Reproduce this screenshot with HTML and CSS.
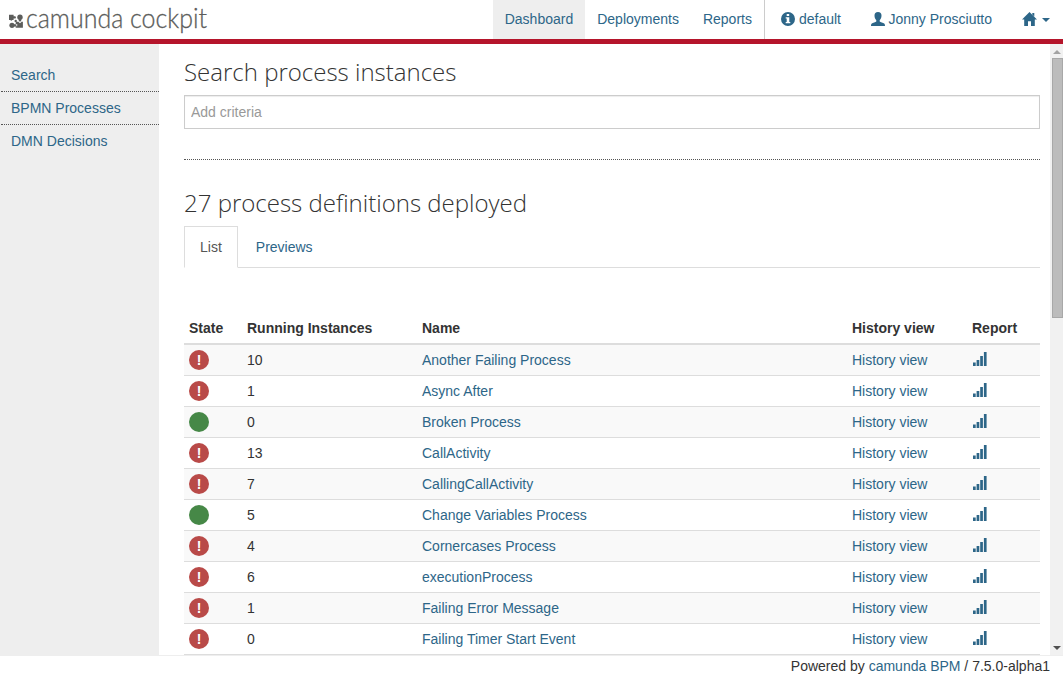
FILE: index.html
```
<!DOCTYPE html>
<html lang="en">
<head>
<meta charset="utf-8">
<title>camunda cockpit</title>
<link rel="stylesheet" href="styles.css">
</head>
<body>
<svg class="defs" width="0" height="0">
  <symbol id="info" viewBox="0 0 14 14"><path fill-rule="evenodd" d="M7 0a7 7 0 1 1 0 14A7 7 0 0 1 7 0zM5.7 2v2h2.5V2zM4.7 5.2v1.3h1V10h-1v1.3h4.600V10h-1V5.200z"/></symbol>
  <symbol id="user" viewBox="0 0 14 14"><path d="M7 0C4.600 0 3.500 1.500 3.500 3.500c0 1.900.7 3.600 1.800 4.700v1.300c-.6.600-3.500 1.300-4.500 2C.2 12 0 13 0 14h14c0-1-.2-2-.8-2.500-1-.7-3.900-1.400-4.500-2V8.200c1.100-1.100 1.800-2.800 1.800-4.700C10.500 1.500 9.400 0 7 0z"/></symbol>
  <symbol id="home" viewBox="0 0 15 14"><path d="M7.500 0 15 7.600h-2.200V14H9V9.300H6V14H2.200V7.600H0L3 4.600 7.500 0zM10.300 1h2v3.500l-2-2z"/></symbol>
  <symbol id="signal" viewBox="0 0 14 14"><path d="M0 10.500h2.700V14H0zM3.600 8h2.700v6H3.600zM7.200 4h2.700v10H7.200zM10.900 0h2.700v14h-2.700z"/></symbol>
</svg>
<header class="header">
  <a class="brand">
    <svg width="215" height="39" viewBox="0 0 215 39">
      <g class="mark">
        <path d="M9 14.700h4.600v1.600h1.600a1.200 1.200 0 0 1 0 2.200h-1.600v1.600h-1.300a1.200 1.200 0 0 1-2 0H9z"/>
        <circle cx="20" cy="17.300" r="2.700"/>
        <path d="M18.800 19h2.400v2.400h-2.400z"/>
        <circle cx="12" cy="25.300" r="2.600"/>
        <path d="M14 24.200h2.400v2.200H14zM15.700 21.800h2.600l1.700 1.500 1.700-1.500h1.200v6h-7.200v-1.500h1.500v-2.400h-1.500z"/>
        <circle cx="15.700" cy="20.900" r="1.200"/>
      </g>
      <text class="wordmark" x="26" y="28" textLength="181" lengthAdjust="spacingAndGlyphs">camunda cockpit</text>
    </svg>
  </a>
  <nav class="nav">
    <a class="nav-item active">Dashboard</a>
    <a class="nav-item">Deployments</a>
    <a class="nav-item reports">Reports</a>
    <a class="nav-item engine"><svg class="icon"><use href="#info"/></svg>default</a>
    <a class="nav-item account"><svg class="icon"><use href="#user"/></svg>Jonny Prosciutto</a>
    <a class="nav-item apps"><svg class="icon home"><use href="#home"/></svg><i class="caret"></i></a>
  </nav>
</header>
<div class="middle">
  <aside class="sidebar">
    <a>Search</a>
    <a>BPMN Processes</a>
    <a>DMN Decisions</a>
  </aside>
  <main class="content">
    <h3>Search process instances</h3>
    <input class="search" type="text" placeholder="Add criteria">
    <h3 class="deployed">27 process definitions deployed</h3>
    <div class="tabs"><a class="tab current">List</a><a class="tab">Previews</a></div>
    <table class="definitions">
      <thead><tr><th class="state">State</th><th class="instances">Running Instances</th><th class="name">Name</th><th class="history">History view</th><th class="report">Report</th></tr></thead>
      <tbody>
        <tr><td><i class="dot failing">!</i></td><td>10</td><td><a>Another Failing Process</a></td><td><a>History view</a></td><td><svg class="icon"><use href="#signal"/></svg></td></tr>
        <tr><td><i class="dot failing">!</i></td><td>1</td><td><a>Async After</a></td><td><a>History view</a></td><td><svg class="icon"><use href="#signal"/></svg></td></tr>
        <tr><td><i class="dot"></i></td><td>0</td><td><a>Broken Process</a></td><td><a>History view</a></td><td><svg class="icon"><use href="#signal"/></svg></td></tr>
        <tr><td><i class="dot failing">!</i></td><td>13</td><td><a>CallActivity</a></td><td><a>History view</a></td><td><svg class="icon"><use href="#signal"/></svg></td></tr>
        <tr><td><i class="dot failing">!</i></td><td>7</td><td><a>CallingCallActivity</a></td><td><a>History view</a></td><td><svg class="icon"><use href="#signal"/></svg></td></tr>
        <tr><td><i class="dot"></i></td><td>5</td><td><a>Change Variables Process</a></td><td><a>History view</a></td><td><svg class="icon"><use href="#signal"/></svg></td></tr>
        <tr><td><i class="dot failing">!</i></td><td>4</td><td><a>Cornercases Process</a></td><td><a>History view</a></td><td><svg class="icon"><use href="#signal"/></svg></td></tr>
        <tr><td><i class="dot failing">!</i></td><td>6</td><td><a>executionProcess</a></td><td><a>History view</a></td><td><svg class="icon"><use href="#signal"/></svg></td></tr>
        <tr><td><i class="dot failing">!</i></td><td>1</td><td><a>Failing Error Message</a></td><td><a>History view</a></td><td><svg class="icon"><use href="#signal"/></svg></td></tr>
        <tr><td><i class="dot failing">!</i></td><td>0</td><td><a>Failing Timer Start Event</a></td><td><a>History view</a></td><td><svg class="icon"><use href="#signal"/></svg></td></tr>
      </tbody>
    </table>
  </main>
  <div class="scrollbar"><i class="arrow up"></i><div class="thumb"></div><i class="arrow down"></i></div>
</div>
<footer class="footer">Powered by <a>camunda BPM</a> / 7.5.0-alpha1</footer>
</body>
</html>
```
FILE: styles.css
```
* { box-sizing: border-box; }
body {
  margin: 0;
  height: 685px;
  display: flex;
  flex-direction: column;
  background: #fff;
  color: #333;
  font: 14px/20px "Liberation Sans", Arial, sans-serif;
}
a { color: #2d6688; text-decoration: none; }
.defs { position: absolute; }
.icon { width: 14px; height: 14px; fill: #2d6688; flex: none; }

.header {
  height: 44px;
  flex: none;
  display: flex;
  justify-content: space-between;
  border-bottom: 5px solid #b5152b;
}
.brand svg { display: block; overflow: visible; }
.mark { fill: #5c5d5b; }
.wordmark { font: 300 27px Lato, sans-serif; fill: #5c5d5b; stroke: #5c5d5b; stroke-width: .3px; }
.nav { display: flex; height: 39px; }
.nav-item { display: flex; align-items: center; padding: 0 12px 2px; }
.active { background: #eee; padding: 0 12px 2px 11.500px; }
.reports { border-right: 1px solid #ccc; }
.engine { padding: 0 15px 2px 16px; gap: 4px; }
.account { padding: 0 15px 2px 14.500px; gap: 4px; }
.apps { padding: 0 13px 2px 15px; gap: 5px; }
.home { width: 15px; }
.caret {
  width: 8px;
  height: 4px;
  margin-top: 3px;
  border: 4px solid transparent;
  border-top-color: #2d6688;
  border-bottom: 0;
}

.middle { height: 611px; flex: none; display: flex; }
.sidebar { width: 159px; flex: none; background: #eee; padding-top: 15px; }
.sidebar a { display: block; height: 33px; margin-left: 1px; padding: 6px 10px; border-bottom: 1px dotted #555; }
.sidebar a:last-child { border: 0; }
.content { width: 891px; flex: none; padding: 0 10px 0 25px; }
h3 {
  margin: 0;
  padding-top: 15px;
  height: 51px;
  font: 300 24px/26px "Open Sans", sans-serif;
}
.search {
  display: block;
  width: 100%;
  height: 34px;
  padding: 6px;
  border: 1px solid #ccc;
  border-radius: 0;
  box-shadow: inset 0 1px 1px rgba(0, 0, 0, .075);
  font: inherit;
  outline: 0;
}
.search::placeholder { color: #999; }
.deployed { margin-top: 30px; height: 67px; padding-top: 30px; border-top: 1px dotted #555; }
.tabs { display: flex; gap: 1px; height: 42px; border-bottom: 1px solid #ddd; }
.tab { height: 42px; padding: 10px 16px; border: 1px solid transparent; line-height: 20px; }
.current { padding: 10px 15px; color: #555; background: #fff; border-color: #ddd; border-bottom-color: #fff; }
.definitions {
  width: 100%;
  margin-top: 45px;
  table-layout: fixed;
  border-collapse: separate;
  border-spacing: 0;
}
th { height: 32px; padding: 5px; text-align: left; border-bottom: 2px solid #ddd; }
td { height: 31px; padding: 5px; border-bottom: 1px solid #ddd; }
.state { width: 58px; }
.instances { width: 175px; }
.name { width: 430px; }
.history { width: 120px; }
tbody tr:nth-child(odd) { background: #f9f9f9; }
td .icon { display: block; margin: 0 0 2px 1px; }
.dot {
  display: block;
  width: 20px;
  height: 20px;
  border-radius: 50%;
  background: #468847;
  color: #fff;
  text-align: center;
  font: bold 14px/20px "Liberation Sans", Arial, sans-serif;
}
.failing { background: #b94a48; }

.scrollbar {
  width: 13px;
  flex: none;
  display: flex;
  flex-direction: column;
  align-items: flex-end;
  background: #f1f1f1;
}
.thumb { width: 11px; height: 260px; background: #bcbcbc; border: 1px solid #a8a8a8; }
.arrow { border: 4px solid transparent; margin-right: 2px; }
.up { border-top: 0; border-bottom-color: #a3a3a3; margin-top: 6px; margin-bottom: 4px; }
.down { border-bottom: 0; border-top-color: #505050; margin-top: auto; margin-bottom: 5px; }
.footer {
  flex: 1;
  border-top: 1px solid #eee;
  padding-right: 13px;
  text-align: right;
}
```
